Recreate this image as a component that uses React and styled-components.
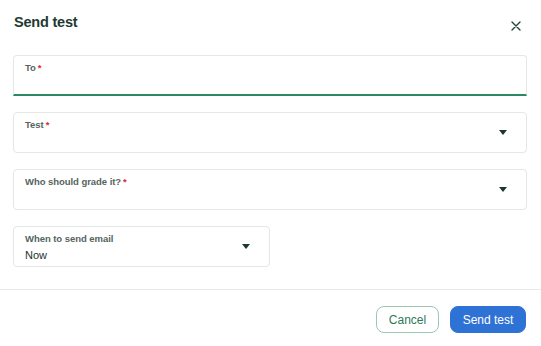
import React from "react";
import styled, { createGlobalStyle } from "styled-components";

const GlobalStyle = createGlobalStyle`
  html, body {
    margin: 0;
    padding: 0;
    background: #ffffff;
    font-family: "Liberation Sans", Arial, sans-serif;
  }
`;

const Modal = styled.div`
  width: 541px;
  height: 346px;
  display: flex;
  flex-direction: column;
  background: #fff;
`;

const Header = styled.div`
  display: flex;
  justify-content: space-between;
  align-items: flex-start;
  padding: 14px 18px 0 14px;
  height: 41px;
`;

const Title = styled.h2`
  margin: 0;
  font-size: 14.5px;
  font-weight: 700;
  color: #1d3a31;
  letter-spacing: -0.2px;
`;

const CloseButton = styled.button`
  border: 0;
  background: none;
  padding: 0;
  margin-top: 5px;
  width: 14px;
  height: 14px;
  display: flex;
  align-items: center;
  justify-content: center;
  cursor: pointer;
`;

const Body = styled.div`
  display: flex;
  flex-direction: column;
  gap: 16px;
  padding: 0 14px 0 13px;
`;

const Field = styled.div`
  box-sizing: border-box;
  width: ${(p) => (p.$half ? "257px" : "100%")};
  height: 41px;
  border: 1px solid #e3e7e6;
  border-bottom: ${(p) => (p.$active ? "2px solid #2a8a63" : "1px solid #e3e7e6")};
  border-radius: ${(p) => (p.$active ? "4px 4px 0 0" : "4px")};
  padding: 6px 19px 0 11px;
  display: flex;
  justify-content: space-between;
  align-items: flex-start;
`;

const FieldText = styled.div`
  display: flex;
  flex-direction: column;
  gap: 3px;
`;

const Label = styled.label`
  font-size: 9.5px;
  font-weight: 700;
  color: #55645e;
  line-height: 12px;
  letter-spacing: -0.05px;
`;

const Required = styled.span`
  color: #e0282e;
  margin-left: 2px;
`;

const Value = styled.div`
  font-size: 11px;
  color: #25332e;
  line-height: 14px;
`;

const Caret = styled.span`
  margin-top: 11px;
  width: 0;
  height: 0;
  border-left: 4.5px solid transparent;
  border-right: 4.5px solid transparent;
  border-top: 5px solid #1b382e;
`;

const Divider = styled.hr`
  margin: 22px 0 0;
  border: 0;
  border-top: 1px solid #e6e9e8;
`;

const Footer = styled.div`
  display: flex;
  justify-content: flex-end;
  gap: 11px;
  padding: 16px 15px 0 0;
`;

const Button = styled.button`
  box-sizing: border-box;
  width: ${(p) => (p.$primary ? "76px" : "63px")};
  height: 27px;
  padding: 0;
  border-radius: 8px;
  font-family: "Liberation Sans", Arial, sans-serif;
  font-size: 12px;
  cursor: pointer;
  border: 1px solid ${(p) => (p.$primary ? "#2f72d6" : "#9cc8b3")};
  background: ${(p) => (p.$primary ? "#2f72d6" : "#ffffff")};
  color: ${(p) => (p.$primary ? "#ffffff" : "#2b7a58")};
`;

const fields = [
  { label: "To", required: true, active: true },
  { label: "Test", required: true, select: true },
  { label: "Who should grade it?", required: true, select: true },
  { label: "When to send email", value: "Now", select: true, half: true },
];

export default function App() {
  return (
    <>
      <GlobalStyle />
      <Modal>
        <Header>
          <Title>Send test</Title>
          <CloseButton aria-label="Close">
            <svg width="10" height="10" viewBox="0 0 10 10">
              <path d="M1 1L9 9M9 1L1 9" stroke="#27443a" strokeWidth="1.4" strokeLinecap="round" />
            </svg>
          </CloseButton>
        </Header>
        <Body>
          {fields.map((f) => (
            <Field key={f.label} $active={f.active} $half={f.half}>
              <FieldText>
                <Label>
                  {f.label}
                  {f.required && <Required>*</Required>}
                </Label>
                {f.value && <Value>{f.value}</Value>}
              </FieldText>
              {f.select && <Caret />}
            </Field>
          ))}
        </Body>
        <Divider />
        <Footer>
          <Button>Cancel</Button>
          <Button $primary>Send test</Button>
        </Footer>
      </Modal>
    </>
  );
}
